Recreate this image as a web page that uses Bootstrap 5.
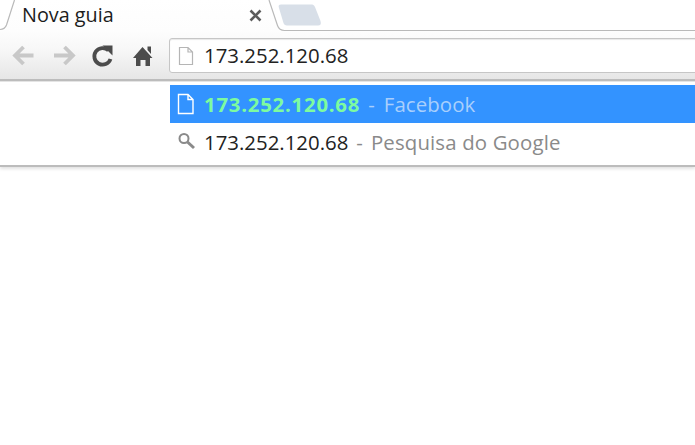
<!DOCTYPE html>
<html lang="pt">
<head>
<meta charset="utf-8">
<title>Nova guia</title>
<link href="https://cdn.jsdelivr.net/npm/bootstrap@5.3.0/dist/css/bootstrap.min.css" rel="stylesheet">
<style>
html,body{margin:0;height:100%;background:#fff;overflow:hidden}
body{font-family:"Open Sans","Noto Sans","Liberation Sans",sans-serif;color:#222}
.tabstrip{height:31px;position:relative}
.tabshape{position:absolute;left:0;top:0}
.tabtitle{font-size:19.8px;line-height:30px;margin-left:22px;color:#1c1c1c;position:relative}
.toolbar{height:50px;background:linear-gradient(#fdfdfd,#f7f7f7 40%,#e6e6e6);border-bottom:2px solid #bcbcbc;box-shadow:0 1px 0 #e4e4e4;position:relative}
.btnzone{width:169px;flex:none;height:100%}
.ico{position:absolute}
.omni{position:absolute;left:169px;top:7px;right:-6px;height:35px;background:#fff;border:1px solid #c6c6c6;border-radius:3px;box-shadow:inset 0 1px 1px #e8e8e8}
.addr{font-size:20.4px;line-height:33px;margin-left:34px;color:#222}
.drop{margin-top:4px;height:82px;border-bottom:2px solid #bcbcbc;padding-left:170px;box-shadow:0 2px 3px #e2e2e2}
.sugg{height:38px;line-height:38px;font-size:20.4px;position:relative;padding-left:34px;white-space:nowrap}
.sugg2{height:40px;line-height:38px}
.on{background:#3393ff;color:#fff}
.hit{font-weight:700;color:#7dfb9f;letter-spacing:.75px}
.sep1{color:#a9cffc;margin-left:8px}
.desc1{color:#a9cffc;margin-left:9px;letter-spacing:.1px}
.sep2,.desc2{color:#8a8a8a;margin-left:8px}
.desc2{letter-spacing:.15px}
</style>
</head>
<body>
<div class="tabstrip">
<svg class="tabshape" width="695" height="32" viewBox="0 0 695 32">
<defs><linearGradient id="t" x1="0" y1="0" x2="0" y2="1"><stop offset="0" stop-color="#fff"/><stop offset="1" stop-color="#fdfdfd"/></linearGradient></defs>
<path d="M0 30.500H2C5 30.500 6 28 7 26L15 0H268L277 26C278 29 280 30.500 284 30.500H695V32H0Z" fill="url(#t)"/>
<path d="M0 29.500C4 29.500 5.500 27.500 6.500 25L14.500 0M269 0L277.500 25.500C278.500 28.500 280.500 30.500 284.500 30.500H695" fill="none" stroke="#b9b9b9" stroke-width="1.200"/>
<path d="M279 8C278 5.500 279 4.500 281 4.500H311C313 4.500 314 5 315 7L320.500 21C321.500 24 320.500 25.500 318 25.500H287C285 25.500 284 24.500 283.500 23Z" fill="#d8dfe8"/>
<path d="M250.500 10.500L260.500 20.500M260.500 10.500L250.500 20.500" stroke="#5c5c5c" stroke-width="2.600"/>
</svg>
<div class="tabtitle">Nova guia</div>
</div>
<div class="toolbar d-flex">
<div class="btnzone">
<svg class="ico" style="left:0;top:0" width="165" height="48" viewBox="0 0 165 48">
<path d="M14.500 24.500H33.500M23.500 16L15 24.500L23.500 33" fill="none" stroke="#c8c8c8" stroke-width="3.800"/>
<path d="M54 24.500H73M64.500 16L73 24.500L64.500 33" fill="none" stroke="#c8c8c8" stroke-width="3.800"/>
<path d="M108.500 19.500A8.300 8.300 0 1 0 110.500 28" fill="none" stroke="#4c4c4c" stroke-width="3.800"/>
<path d="M102.500 14.500H112.500V24.500Z" fill="#4c4c4c"/>
<path d="M142.500 16L152.500 27H150V35H145.500V29H140.500V35H136V27H133Z" fill="#4c4c4c"/>
<path d="M147.500 15.500H151V23L147.500 19Z" fill="#4c4c4c"/>
</svg>
</div>
<div class="omni">
<svg class="ico" style="left:8px;top:7px" width="16" height="20" viewBox="0 0 16 20"><path d="M1.500 1.500H10L14.500 6V18.500H1.500Z M10 1.500V6H14.500" fill="#fff" stroke="#b5b5b5" stroke-width="1.200"/></svg>
<div class="addr">173.252.120.68</div>
</div>
</div>
<div class="drop">
<div class="sugg on">
<svg class="ico" style="left:7px;top:8px" width="18" height="22" viewBox="0 0 18 22"><path d="M1.500 1.500H11L16 6.500V20.500H1.500Z M11 1.500V6.500H16" fill="none" stroke="#fff" stroke-width="1.400"/></svg>
<span class="hit">173.252.120.68</span><span class="sep1">-</span><span class="desc1">Facebook</span>
</div>
<div class="sugg sugg2">
<svg class="ico" style="left:7px;top:9px" width="20" height="20" viewBox="0 0 20 20"><circle cx="7" cy="6.500" r="4.500" fill="none" stroke="#8a8a8a" stroke-width="2"/><path d="M10.500 10L17 16" stroke="#8a8a8a" stroke-width="3"/></svg>
<span>173.252.120.68</span><span class="sep2">-</span><span class="desc2">Pesquisa do Google</span>
</div>
</div>
<script src="https://cdn.jsdelivr.net/npm/bootstrap@5.3.0/dist/js/bootstrap.bundle.min.js"></script>
</body>
</html>
